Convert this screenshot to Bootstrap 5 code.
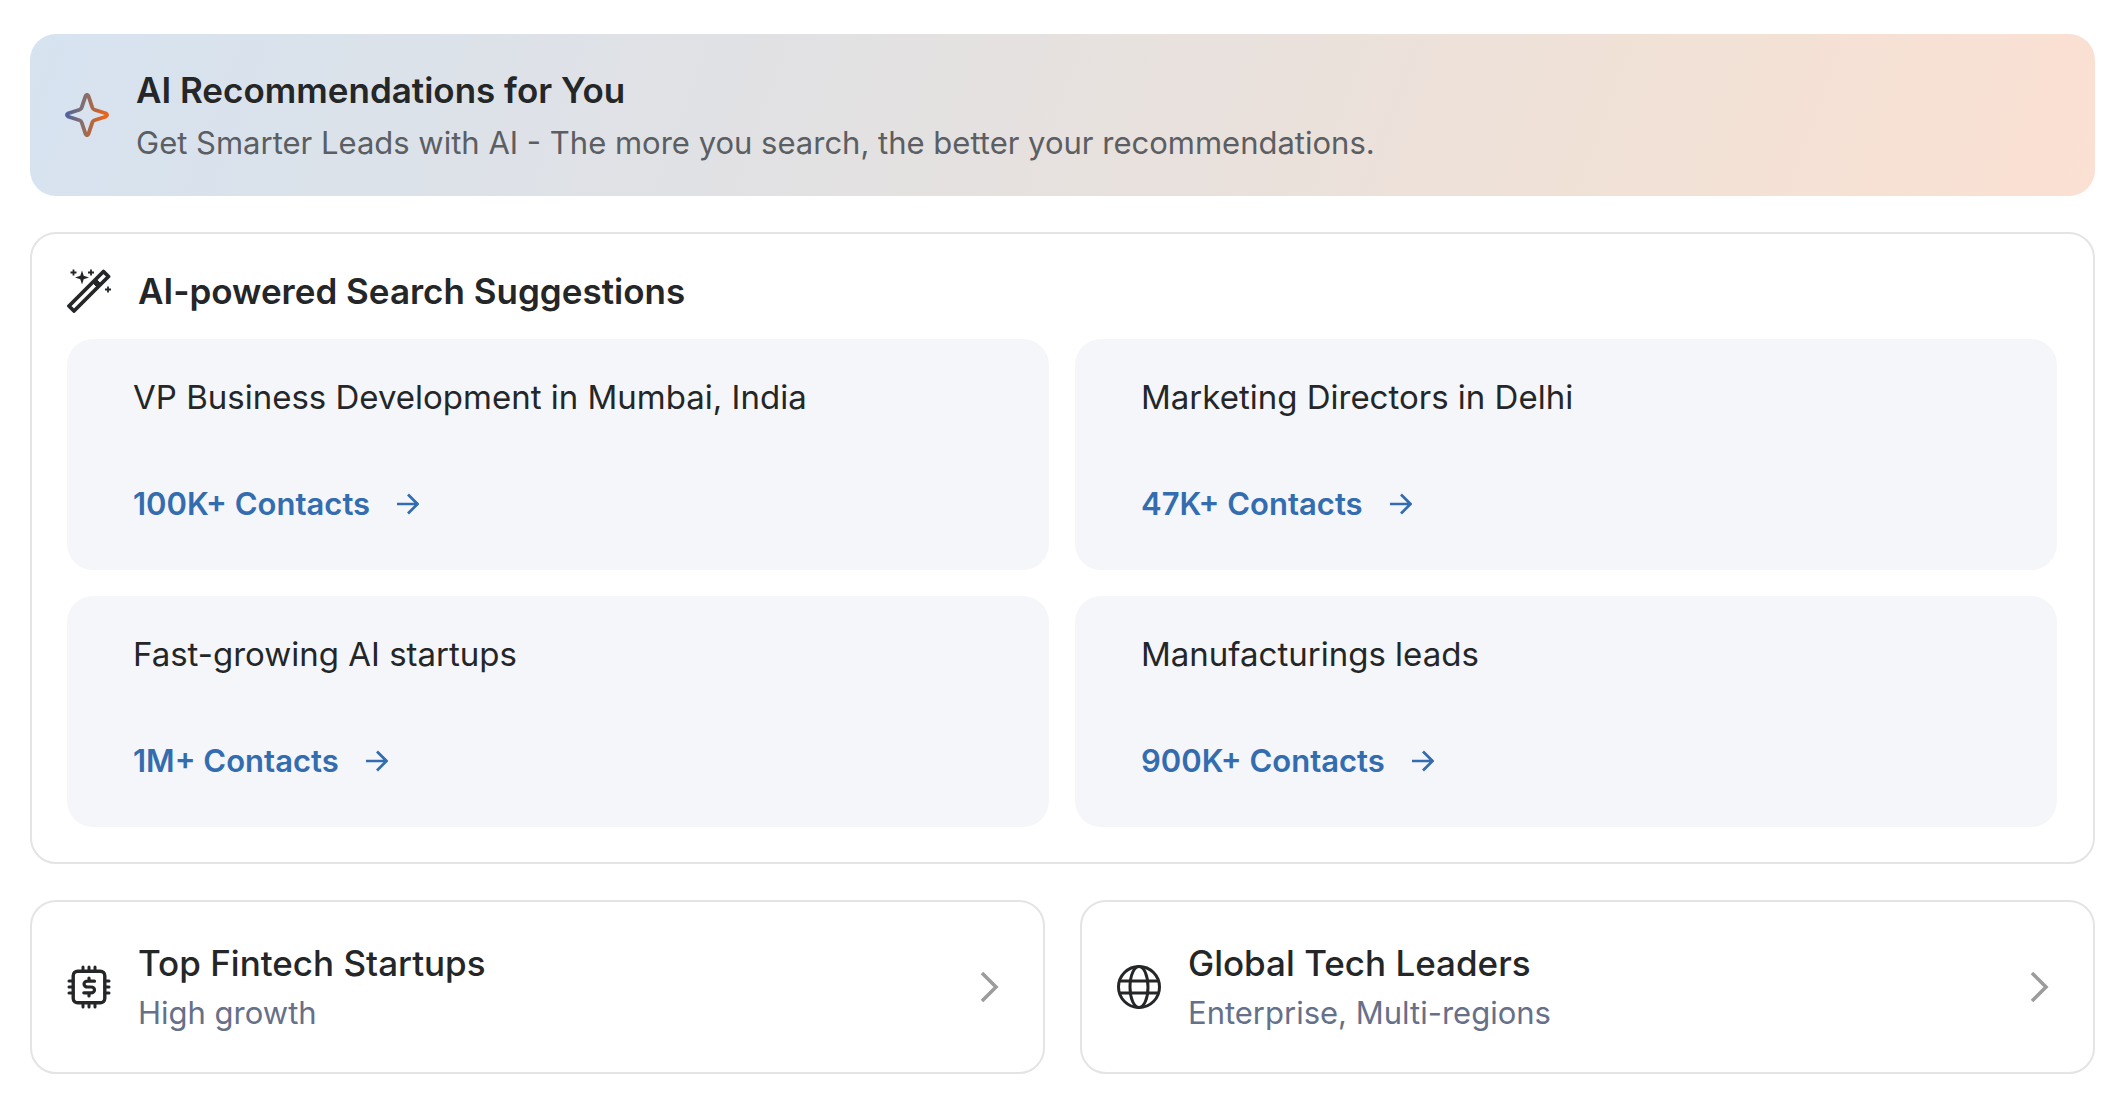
<!DOCTYPE html>
<html lang="en">
<head>
<meta charset="utf-8">
<meta name="viewport" content="width=device-width, initial-scale=1">
<title>AI Recommendations</title>
<link href="https://cdn.jsdelivr.net/npm/bootstrap@5.3.0/dist/css/bootstrap.min.css" rel="stylesheet">
<style>
body { font-family: Inter, "Liberation Sans", sans-serif; color: #242628; background: #fff; }
.page { padding: 34px 32px 28px 30px; gap: 36px; }
.banner { background: linear-gradient(110deg, #d6e3f0 0%, #e2e1e3 38%, #f2e1d6 80%, #fbe0d3 100%); border-radius: 26px; padding: 28px 35px; gap: 27px; }
.panel { border: 2px solid #e4e4e5; border-radius: 26px; padding: 35px 36px 35px 35px; background: #fff; }
.panel-head { gap: 27px; margin-bottom: 26px; }
.title { font-size: 35px; line-height: 44px; font-weight: 600; margin: 0; }
.banner .title { line-height: 56px; }
.banner-text { font-size: 31px; line-height: 50px; color: #5b5e62; margin: 0; }
.tile { background: #f4f6fa; border-radius: 26px; padding: 33px 66px 41px; color: inherit; gap: 57px; height: 100%; }
.tile-name { font-size: 33px; line-height: 50px; }
.tile-count { font-size: 31px; line-height: 50px; font-weight: 600; color: #346cb0; gap: 27px; }
.tiles, .shortcuts { --bs-gutter-y: 26px; --bs-gutter-x: 26px; }
.shortcuts { --bs-gutter-x: 35px; }
.shortcut { color: inherit; gap: 27px; }
.shortcut .title { line-height: 52px; font-weight: 500; }
.shortcut-text { font-size: 31px; line-height: 48px; color: #667089; }
.icon { width: 44px; height: 44px; flex: none; }
.icon-arrow { width: 22px; height: 22px; flex: none; }
.icon-chevron { width: 20px; height: 32px; flex: none; margin-right: 8px; color: #9c9c9c; }
</style>
</head>
<body>
<main class="page d-flex flex-column">
  <section class="banner d-flex align-items-center">
    <svg class="icon" viewBox="0 0 44 44" fill="none" aria-hidden="true">
      <defs><linearGradient id="spark" x1="0" y1="0" x2="1" y2="0.15"><stop offset="0" stop-color="#4a5fa5"/><stop offset="0.45" stop-color="#846f70"/><stop offset="0.65" stop-color="#ab6647"/><stop offset="1" stop-color="#e8651a"/></linearGradient></defs>
      <path d="M20.500 3.200q1.500-2.800 3 0L27.300 14.500q.6 1.700 2.200 2.200L40.500 20.200q3.200 1.800 0 3.600L29.500 27.300q-1.600.5-2.200 2.200L23.500 40.800q-1.500 2.800-3 0L16.700 29.500q-.6-1.700-2.200-2.200L3.500 23.800q-3.200-1.800 0-3.600L14.500 16.700q1.600-.5 2.200-2.200z" stroke="url(#spark)" stroke-width="3.800" stroke-linejoin="round"/>
    </svg>
    <div>
      <h1 class="title">AI Recommendations for You</h1>
      <p class="banner-text">Get Smarter Leads with AI - The more you search, the better your recommendations.</p>
    </div>
  </section>

  <section class="panel">
    <div class="panel-head d-flex align-items-center">
      <svg class="icon" viewBox="0 0 44 44" fill="none" stroke="#242628" aria-hidden="true">
        <path d="M36.500 2.500L41.500 7.500L7 42L2 37z" stroke-width="3.800" stroke-linejoin="round"/>
        <path d="M25.500 13.500L30.500 18.500L34 15L29 10z" fill="#242628" stroke-width="1"/>
        <path d="M15 1.500L16.700 6.800L22 8.500L16.700 10.200L15 15.500L13.300 10.200L8 8.500L13.300 6.800z" fill="#242628" stroke="none"/>
        <path d="M6.500 .5v6M3.500 3.500h6M24 .5v6M21 3.500h6M41 17.500v6M38 20.500h6" stroke-width="1.800"/>
      </svg>
      <h2 class="title">AI-powered Search Suggestions</h2>
    </div>
    <div class="row row-cols-2 tiles">
      <div class="col"><a href="#" class="tile d-flex flex-column text-decoration-none">
        <span class="tile-name">VP Business Development in Mumbai, India</span>
        <span class="tile-count d-flex align-items-center">100K+ Contacts <svg class="icon-arrow" viewBox="0 0 22 22" fill="none" stroke="currentColor" stroke-width="2.700" aria-hidden="true"><path d="M0 11h20M11 1.500L20.500 11L11 20.500"/></svg></span>
      </a></div>
      <div class="col"><a href="#" class="tile d-flex flex-column text-decoration-none">
        <span class="tile-name">Marketing Directors in Delhi</span>
        <span class="tile-count d-flex align-items-center">47K+ Contacts <svg class="icon-arrow" viewBox="0 0 22 22" fill="none" stroke="currentColor" stroke-width="2.700" aria-hidden="true"><path d="M0 11h20M11 1.500L20.500 11L11 20.500"/></svg></span>
      </a></div>
      <div class="col"><a href="#" class="tile d-flex flex-column text-decoration-none">
        <span class="tile-name">Fast-growing AI startups</span>
        <span class="tile-count d-flex align-items-center">1M+ Contacts <svg class="icon-arrow" viewBox="0 0 22 22" fill="none" stroke="currentColor" stroke-width="2.700" aria-hidden="true"><path d="M0 11h20M11 1.500L20.500 11L11 20.500"/></svg></span>
      </a></div>
      <div class="col"><a href="#" class="tile d-flex flex-column text-decoration-none">
        <span class="tile-name">Manufacturings leads</span>
        <span class="tile-count d-flex align-items-center">900K+ Contacts <svg class="icon-arrow" viewBox="0 0 22 22" fill="none" stroke="currentColor" stroke-width="2.700" aria-hidden="true"><path d="M0 11h20M11 1.500L20.500 11L11 20.500"/></svg></span>
      </a></div>
    </div>
  </section>

  <section class="row row-cols-2 shortcuts">
    <div class="col"><a href="#" class="panel shortcut d-flex align-items-center text-decoration-none">
      <svg class="icon" viewBox="0 0 44 44" fill="none" stroke="#242628" stroke-linecap="round" aria-hidden="true">
        <rect x="6.200" y="6.200" width="31.600" height="31.600" rx="4.500" stroke-width="3.400"/>
        <path d="M16 2v4M22 2v4M28 2v4M16 38v4M22 38v4M28 38v4M2 16h4M2 22h4M2 28h4M38 16h4M38 22h4M38 28h4" stroke-width="3"/>
        <path d="M27.500 16.200H20.500a3.500 2.900 0 0 0 0 5.800H24a3.500 2.900 0 0 1 0 5.800H16.800M22 13v3M22 28v3" stroke-width="3.200"/>
      </svg>
      <div class="flex-grow-1"><h3 class="title">Top Fintech Startups</h3><div class="shortcut-text">High growth</div></div>
      <svg class="icon-chevron" viewBox="0 0 20 32" fill="none" stroke="currentColor" stroke-width="3.600" aria-hidden="true"><path d="M3 2L17 16L3 30"/></svg>
    </a></div>
    <div class="col"><a href="#" class="panel shortcut d-flex align-items-center text-decoration-none">
      <svg class="icon" viewBox="0 0 44 44" fill="none" stroke="#242628" stroke-width="3" aria-hidden="true">
        <circle cx="22" cy="22" r="20.500"/><ellipse cx="22" cy="22" rx="9" ry="20.500"/><path d="M2.500 16h39M2.500 28h39"/>
      </svg>
      <div class="flex-grow-1"><h3 class="title">Global Tech Leaders</h3><div class="shortcut-text">Enterprise, Multi-regions</div></div>
      <svg class="icon-chevron" viewBox="0 0 20 32" fill="none" stroke="currentColor" stroke-width="3.600" aria-hidden="true"><path d="M3 2L17 16L3 30"/></svg>
    </a></div>
  </section>
</main>
<script src="https://cdn.jsdelivr.net/npm/bootstrap@5.3.0/dist/js/bootstrap.bundle.min.js"></script>
</body>
</html>
